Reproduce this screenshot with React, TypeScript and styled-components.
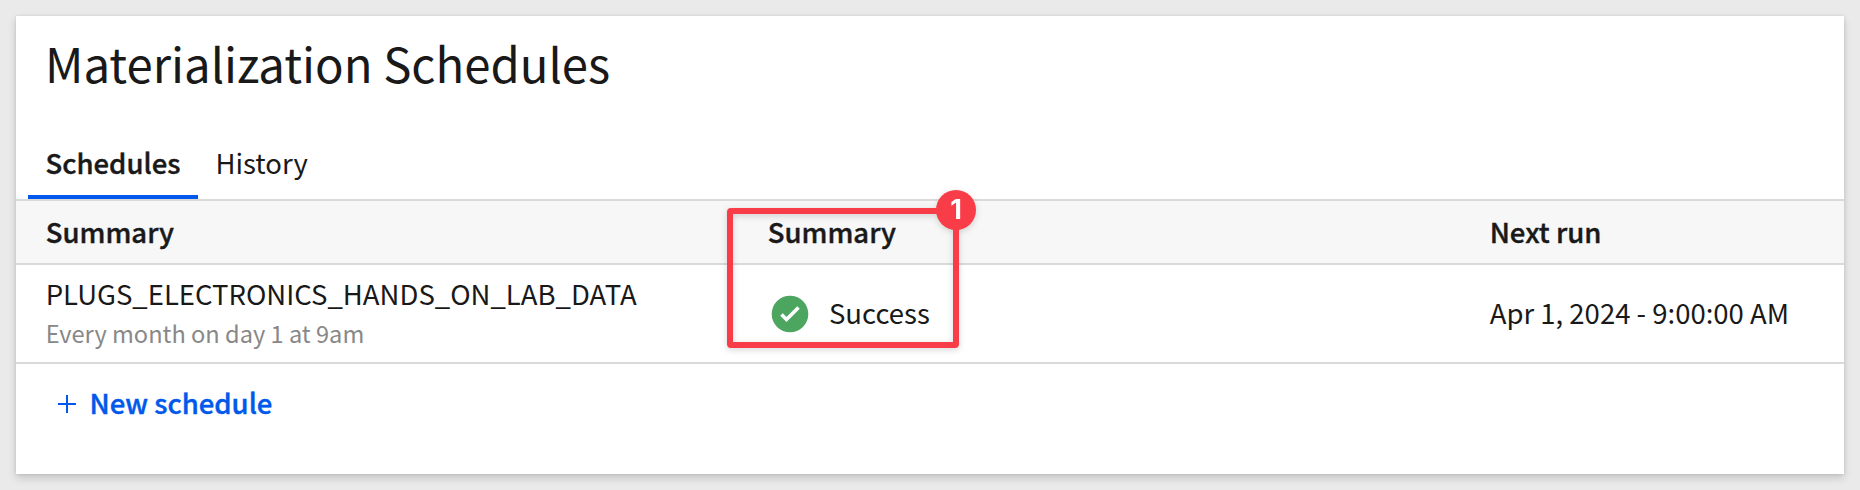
import React from "react";
import styled, { createGlobalStyle, css } from "styled-components";

const GlobalStyle = createGlobalStyle`
  * { box-sizing: border-box; }
  body {
    margin: 0;
    background: #eaeaea;
    color: #191919;
    font-family: "Noto Sans CJK SC", "Noto Sans", sans-serif;
    font-size: 27.5px;
  }
`;

const semibold = css`
  font-weight: 500;
  -webkit-text-stroke: 0.4px currentColor;
`;

const Page = styled.div`
  height: 490px;
  padding: 16px;
  overflow: hidden;
`;

const Card = styled.main`
  position: relative;
  height: 458px;
  background: #fff;
  box-shadow: 0 4px 8px rgba(0, 0, 0, 0.16), 0 0 3px rgba(0, 0, 0, 0.1);
`;

const Title = styled.h1`
  margin: 0;
  padding: 12px 29px 0;
  height: 116px;
  font-size: 47.3px;
  font-weight: 400;
  line-height: 70px;
  white-space: nowrap;
`;

const Tabs = styled.nav`
  display: flex;
  height: 69px;
  padding-left: 12px;
  border-bottom: 2px solid #dadada;
`;

const Tab = styled.a<{ $active?: boolean }>`
  min-width: ${(p) => (p.$active ? "170px" : "0")};
  height: 67px;
  padding: 8px 17.5px 0;
  line-height: 44px;
  border-bottom: 4px solid ${(p) => (p.$active ? "#0059eb" : "transparent")};
  ${(p) => p.$active && semibold}
`;

const rowLayout = css`
  display: grid;
  grid-template-columns: 722px 722px 1fr;
  align-items: center;
  padding-left: 29.7px;
  border-bottom: 2px solid #dadada;
`;

const HeaderRow = styled.div`
  ${rowLayout}
  ${semibold}
  height: 64px;
  padding-bottom: 3px;
  background: #f7f7f7;
`;

const Row = styled.div`
  ${rowLayout}
  height: 99px;
`;

const Text = styled.span`
  display: block;
  line-height: 40px;
  white-space: nowrap;
`;

const Name = styled(Text)`
  line-height: 39px;
`;

const Value = styled(Text)`
  padding-bottom: 4px;
`;

const Detail = styled(Text)`
  color: #888;
  font-size: 23.6px;
`;

const Status = styled.div`
  display: flex;
  align-items: center;
  gap: 20px;
  padding-left: 3.3px;
`;

const NewSchedule = styled.button`
  display: flex;
  align-items: center;
  gap: 13.5px;
  height: 80px;
  padding: 0 42px;
  border: 0;
  background: none;
  color: #0059eb;
  font: inherit;
  ${semibold}
`;

const ButtonLabel = styled.span`
  padding-bottom: 5px;
`;

const Callout = styled.div`
  position: absolute;
  left: 711px;
  top: 192px;
  width: 232px;
  height: 140px;
  border: 6px solid #f93d48;
  border-radius: 4px;
  filter: drop-shadow(0 2px 3px rgba(0, 0, 0, 0.16));
`;

const Badge = styled.span`
  position: absolute;
  top: -24px;
  right: -23px;
  width: 40px;
  height: 40px;
  border-radius: 50%;
  background: #f93d48;
  color: #fff;
  font: 700 27px/39px Inter, sans-serif;
  text-align: center;
`;

export default function App() {
  return (
    <Page>
      <GlobalStyle />
      <Card>
        <Title>Materialization Schedules</Title>
        <Tabs>
          <Tab $active>Schedules</Tab>
          <Tab>History</Tab>
        </Tabs>
        <HeaderRow>
          <Text>Summary</Text>
          <Text>Summary</Text>
          <Text>Next run</Text>
        </HeaderRow>
        <Row>
          <div>
            <Name>PLUGS_ELECTRONICS_HANDS_ON_LAB_DATA</Name>
            <Detail>Every month on day 1 at 9am</Detail>
          </div>
          <Status>
            <svg width="38" height="38" viewBox="0 0 38 38" fill="none">
              <circle cx="19" cy="19" r="18.3" fill="#4da660" />
              <path d="M10.5 19.5L15.5 24.5L27.5 12.5" stroke="#fff" strokeWidth="3.6" />
            </svg>
            <Value>Success</Value>
          </Status>
          <Value>Apr 1, 2024 - 9:00:00 AM</Value>
        </Row>
        <NewSchedule>
          <svg width="18" height="18" viewBox="0 0 18 18" stroke="#0059eb" strokeWidth="2">
            <path d="M9 0V18M0 9H18" />
          </svg>
          <ButtonLabel>New schedule</ButtonLabel>
        </NewSchedule>
        <Callout>
          <Badge>1</Badge>
        </Callout>
      </Card>
    </Page>
  );
}
